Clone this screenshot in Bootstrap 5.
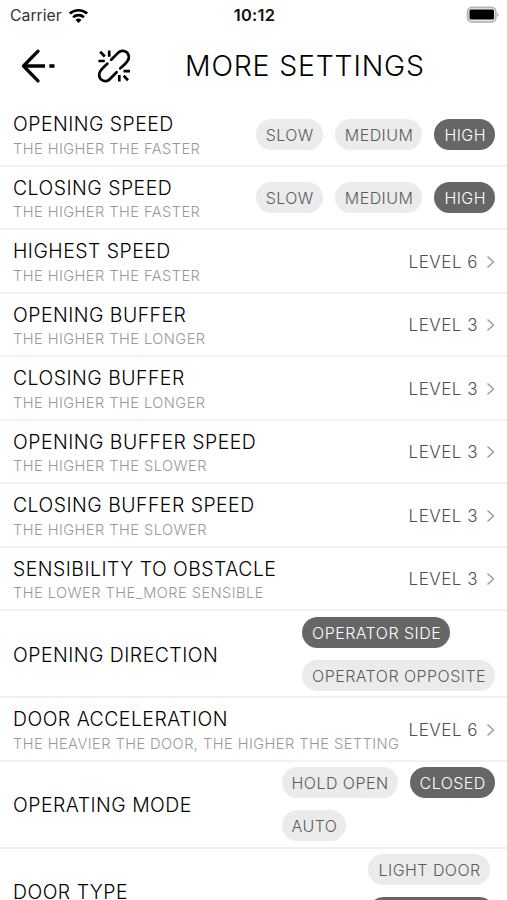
<!DOCTYPE html>
<html lang="en">
<head>
<meta charset="utf-8">
<meta name="viewport" content="width=device-width, initial-scale=1">
<title>More settings</title>
<link href="https://cdn.jsdelivr.net/npm/bootstrap@5.3.0/dist/css/bootstrap.min.css" rel="stylesheet">
<style>
body{font-family:Inter,"Liberation Sans",sans-serif;background:#fff;height:900px;overflow:hidden;color:#1c1c1c}
.statusbar{height:30px;font-size:16px;line-height:30px;padding:0 8px 0 10px;display:grid;grid-template-columns:1fr auto 1fr}
.carrier{color:#333;font-size:15.8px;letter-spacing:0}
.carrier span{padding-top:1px}
.clock{font-weight:600;color:#111;font-size:16.4px;letter-spacing:.3px}
.topbar{height:73.4px;padding-left:19px}
.topbar svg{margin-bottom:2px}
.page-title{font-size:28.4px;font-weight:300;letter-spacing:.83px;line-height:1;color:#000;margin:0 0 0 53px}
.setting{height:63.5px;border-bottom:2px solid #f2f2f2;padding:0 12px 0 13px}
.setting.tall{height:87px}
.label{font-size:19.4px;font-weight:300;line-height:24px;letter-spacing:.5px;color:#000;padding-top:2px}
.hint{font-size:14.6px;font-weight:300;line-height:18px;letter-spacing:.46px;color:#999;margin-top:3.5px}
.pill{height:31px;line-height:32px;border-radius:16px;padding:0 9px 0 10px;font-size:16px;font-weight:300;letter-spacing:.46px;background:#ebebeb;color:#5c5c5c}
.pill.on{background:#666;color:#fff}
.pills{gap:12px}
.level{font-size:17px;font-weight:300;letter-spacing:.5px;color:#505050;gap:8px;padding-top:1px}
.level span{padding-top:2px}
.mode{width:213.5px}
</style>
</head>
<body>
<header>
<div class="statusbar">
<div class="d-flex align-items-center carrier"><span>Carrier</span><svg style="margin-left:6px" width="23" height="18" viewBox="0 0 23 18"><g fill="none" stroke="#000" stroke-width="2.7"><path d="M1.8 6.6a13 13 0 0 1 17.4 0"/><path d="M5.1 10.2a8.2 8.2 0 0 1 10.8 0"/></g><path d="M7.5 12.9a4.6 4.6 0 0 1 6 0L10.5 15.9Z"/></svg></div>
<div class="clock">10:12</div>
<div class="d-flex align-items-center justify-content-end"><svg class="mb-1" width="33" height="18" viewBox="0 0 33 18"><rect x="1.6" y="2.3" width="28.2" height="14.6" rx="4.5" fill="#eee" stroke="#b5b5b5" stroke-width="1.8"/><rect x="3.5" y="4.6" width="24.5" height="10" rx="1.5"/><path d="M31.2 7.8v4q1.3-.6 1.3-2t-1.3-2" fill="#aaa"/></svg></div>
</div>
<div class="topbar d-flex align-items-center">
<svg width="36" height="36" viewBox="0 0 36 36" fill="none" stroke="#000" stroke-width="3.3" stroke-linecap="round" stroke-linejoin="round"><path d="M19 3.2 4.5 18 19 32.8"/><path d="M4.5 18H26M30.3 18H35.5" stroke-linecap="butt"/></svg>
<svg style="margin-left:41px" width="36" height="36" viewBox="0 0 36 36" fill="none" stroke="#000" stroke-width="2.7" stroke-linecap="round"><path d="M15.2 11.8 22 4.9a6.2 6.2 0 0 1 9.7 7.7Q30.8 14.6 24.3 20.3M20.6 24.3 14 31a6.2 6.2 0 0 1-9.7-7.7Q5 21.5 11.3 15.7"/><path d="M13.2 2.5V8.8M4.2 3.7 8.8 8.5M2.4 13H8.8M23.3 27V33.4M27.7 27.8 32 32.3M27.5 23.2H34" stroke-linecap="butt"/></svg>
<h1 class="page-title">MORE SETTINGS</h1>
</div>
</header>
<main id="list"></main>
<script>
const rows = [
 ["OPENING SPEED","THE HIGHER THE FASTER",["SLOW","MEDIUM","*HIGH"]],
 ["CLOSING SPEED","THE HIGHER THE FASTER",["SLOW","MEDIUM","*HIGH"]],
 ["HIGHEST SPEED","THE HIGHER THE FASTER","LEVEL 6"],
 ["OPENING BUFFER","THE HIGHER THE LONGER","LEVEL 3"],
 ["CLOSING BUFFER","THE HIGHER THE LONGER","LEVEL 3"],
 ["OPENING BUFFER SPEED","THE HIGHER THE SLOWER","LEVEL 3"],
 ["CLOSING BUFFER SPEED","THE HIGHER THE SLOWER","LEVEL 3"],
 ["SENSIBILITY TO OBSTACLE","THE LOWER THE_MORE SENSIBLE","LEVEL 3"],
 ["OPENING DIRECTION","",["*OPERATOR SIDE","OPERATOR OPPOSITE"],"flex-column align-items-start"],
 ["DOOR ACCELERATION","THE HEAVIER THE DOOR, THE HIGHER THE SETTING","LEVEL 6"],
 ["OPERATING MODE","",["HOLD OPEN","*CLOSED","AUTO"],"flex-wrap mode"],
 ["DOOR TYPE","",["LIGHT DOOR","*HEAVY DOOR"],"flex-column align-items-start"]
];
const chevron = '<svg width="9" height="14" viewBox="0 0 9 14" fill="none" stroke="#999" stroke-width="1.4"><path d="M1.5 1.5 7.5 7 1.5 12.5"/></svg>';
document.getElementById("list").innerHTML = rows.map(([label,hint,value,layout]) => {
  const right = Array.isArray(value)
    ? `<div class="pills d-flex ${layout||""}">` + value.map(v => `<span class="pill text-nowrap${v[0]==="*"?" on":""}">${v.replace("*","")}</span>`).join("") + `</div>`
    : `<div class="level d-flex align-items-center text-nowrap"><span>${value}</span>${chevron}</div>`;
  return `<div class="setting d-flex align-items-center justify-content-between${hint?"":" tall"}"><div class="text-nowrap"><div class="label">${label}</div>${hint?`<div class="hint">${hint}</div>`:""}</div>${right}</div>`;
}).join("");
</script>
<script src="https://cdn.jsdelivr.net/npm/bootstrap@5.3.0/dist/js/bootstrap.bundle.min.js"></script>
</body>
</html>
